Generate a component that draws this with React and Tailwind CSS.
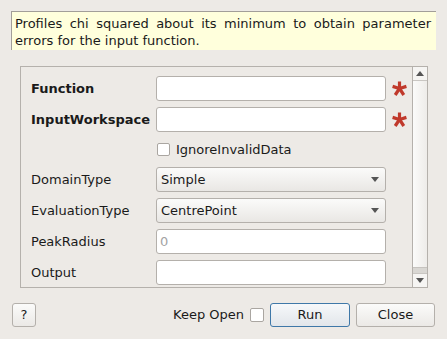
import React from "react";

function Star() {
  // red required-field marker, five arms
  return (
    <svg width="15" height="15" viewBox="0 0 15 15" className="shrink-0">
      <g stroke="#c0392b" strokeWidth="3.2" strokeLinecap="butt">
        <line x1="7.5" y1="7.5" x2="7.5" y2="0.5" />
        <line x1="7.5" y1="7.5" x2="14.4" y2="5.4" />
        <line x1="7.5" y1="7.5" x2="11.8" y2="14" />
        <line x1="7.5" y1="7.5" x2="3.2" y2="14" />
        <line x1="7.5" y1="7.5" x2="0.6" y2="5.4" />
      </g>
    </svg>
  );
}

function TextBox({ value, muted }) {
  return (
    <div className="w-[230px] h-[25px] shrink-0 bg-white border border-[#b4b0ab] rounded-[3px] flex items-center px-[3px]">
      <span className={muted ? "text-[#a3a3a3]" : ""}>{value}</span>
    </div>
  );
}

function Combo({ value }) {
  return (
    <div className="w-[230px] h-[25px] shrink-0 bg-gradient-to-b from-[#fbfbfa] to-[#e9e7e4] border border-[#b4b0ab] rounded-[3px] flex items-center justify-between pl-[4px] pr-[6px]">
      <span>{value}</span>
      <svg width="8" height="5" viewBox="0 0 8 5">
        <polygon points="0,0 8,0 4,5" fill="#555" />
      </svg>
    </div>
  );
}

function Row({ label, bold, children, required }) {
  return (
    <div className="flex items-center h-[25px]">
      <div className={`w-[125px] shrink-0 ${bold ? "font-bold" : ""}`}>{label}</div>
      {children}
      {required && (
        <div className="ml-[6px] flex items-center">
          <Star />
        </div>
      )}
    </div>
  );
}

export default function App() {
  return (
    <div className="w-[447px] h-[339px] bg-[#edeae6] flex flex-col pt-[11px] font-['DejaVu_Sans',sans-serif] text-[13px] text-[#1a1a1a] overflow-hidden">
      {/* description */}
      <div className="ml-[11px] w-[425px] h-[39px] bg-[#ffffdc] border-l border-t border-[#a29e99] pl-[3px] pr-[5px] pt-[3px] leading-[17px] text-justify">
        Profiles chi squared about its minimum to obtain parameter errors for the input function.
      </div>

      {/* properties panel */}
      <div className="ml-[20px] mt-[16px] w-[408px] h-[222px] border border-[#b5b1ac] flex">
        <div className="flex-1 pl-[10px] pt-[9px] flex flex-col gap-[6px] overflow-hidden">
          <Row label="Function" bold required>
            <TextBox value="" />
          </Row>
          <Row label="InputWorkspace" bold required>
            <TextBox value="" />
          </Row>
          <div className="h-[23px] flex items-center pl-[126px]">
            <div className="w-[13px] h-[13px] bg-white border border-[#aaa6a1] rounded-[2px]" />
            <span className="ml-[6px]">IgnoreInvalidData</span>
          </div>
          <Row label="DomainType">
            <Combo value="Simple" />
          </Row>
          <Row label="EvaluationType">
            <Combo value="CentrePoint" />
          </Row>
          <Row label="PeakRadius">
            <TextBox value="0" muted />
          </Row>
          <Row label="Output">
            <TextBox value="" />
          </Row>
        </div>

        {/* scrollbar */}
        <div className="w-[15px] border-l border-[#b5b1ac] flex flex-col bg-[#e6e3df]">
          <div className="h-[14px] flex items-center justify-center border-b border-[#c9c6c2] bg-[#f6f5f3]">
            <svg width="8" height="5" viewBox="0 0 8 5">
              <polygon points="0,5 8,5 4,0" fill="#555" />
            </svg>
          </div>
          <div className="flex-1 bg-gradient-to-r from-[#fbfbfa] to-[#eeece9]" />
          <div className="h-[6px] bg-[#d9d7d3] border-t border-[#c6c3bf]" />
          <div className="h-[14px] flex items-center justify-center border-t border-[#c9c6c2] bg-[#f6f5f3]">
            <svg width="8" height="5" viewBox="0 0 8 5">
              <polygon points="0,0 8,0 4,5" fill="#555" />
            </svg>
          </div>
        </div>
      </div>

      {/* buttons */}
      <div className="mt-[15px] px-[12px] flex items-center">
        <button className="w-[24px] h-[24px] border border-[#b4b0ab] rounded-[3px] bg-gradient-to-b from-[#fbfbfa] to-[#ebe9e6] flex items-center justify-center">
          ?
        </button>
        <div className="flex-1" />
        <span>Keep Open</span>
        <div className="ml-[6px] w-[14px] h-[14px] bg-white border border-[#aaa6a1] rounded-[2px]" />
        <button className="ml-[6px] w-[80px] h-[24px] border border-[#3f78a8] rounded-[3px] bg-gradient-to-b from-[#f6f8fa] to-[#e2e6ea] flex items-center justify-center">
          Run
        </button>
        <button className="ml-[6px] w-[79px] h-[24px] border border-[#b4b0ab] rounded-[3px] bg-gradient-to-b from-[#fbfbfa] to-[#ebe9e6] flex items-center justify-center">
          Close
        </button>
      </div>
    </div>
  );
}
